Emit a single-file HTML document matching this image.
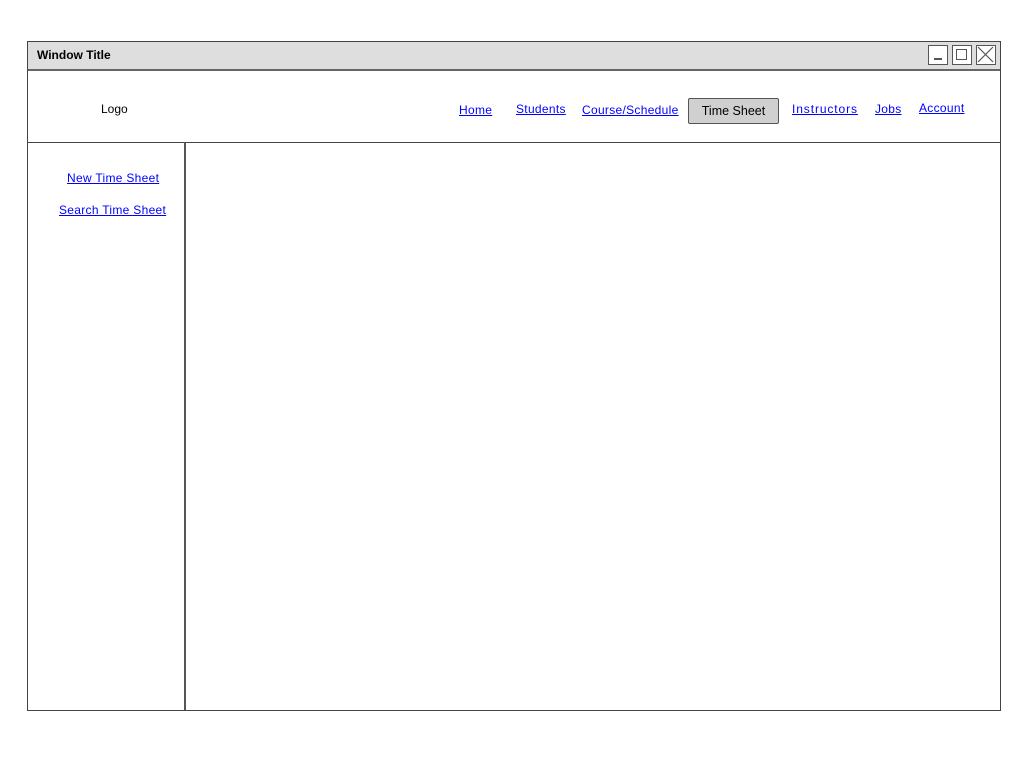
<!DOCTYPE html>
<html><head><style>
body{margin:0;width:1024px;height:768px;background:#fff;position:relative;overflow:hidden;font-family:"Liberation Sans",sans-serif;font-size:12px;color:#000}
.a{position:absolute}
a{color:#00f;text-decoration:underline;position:absolute;white-space:nowrap;letter-spacing:0.3px}
.b{position:absolute;border:1.5px solid #555;background:#fff;box-sizing:border-box;width:20px;height:20px;top:45px}
</style></head><body>
<div class="a" style="left:27px;top:41px;width:972px;height:668px;border:1px solid #444"></div>
<div class="a" style="left:28px;top:42px;width:972px;height:27px;background:#dedede;border-bottom:2px solid #666"></div>
<div class="a" style="left:37px;top:48px;font-weight:bold;font-size:12px">Window Title</div>
<div class="b" style="left:928px"><div class="a" style="left:5px;top:12px;width:8px;height:1.5px;background:#555"></div></div>
<div class="b" style="left:952px"><div class="a" style="left:3px;top:3px;width:11px;height:11px;border:1.5px solid #555;box-sizing:border-box"></div></div>
<div class="b" style="left:976px"><svg class="a" style="left:0;top:0" width="17" height="17"><path d="M1 1L16 16M16 1L1 16" stroke="#555" stroke-width="1.2"/></svg></div>
<div class="a" style="left:28px;top:142px;width:972px;height:1px;background:#444"></div>
<div class="a" style="left:184px;top:142px;width:1.5px;height:568px;background:#555"></div>
<div class="a" style="left:101px;top:102px">Logo</div>
<a style="left:459px;top:103px">Home</a>
<a style="left:516px;top:102px">Students</a>
<a style="left:582px;top:103px">Course/Schedule</a>
<div class="a" style="left:688px;top:98px;width:91px;height:26px;background:#d0d0d0;border:1.5px solid #555;border-radius:2px;box-sizing:border-box;text-align:center;line-height:24px;font-size:12.5px">Time Sheet</div>
<a style="left:792px;top:102px;letter-spacing:0.9px">Instructors</a>
<a style="left:875px;top:102px">Jobs</a>
<a style="left:919px;top:101px">Account</a>
<a style="left:67px;top:171px">New Time Sheet</a>
<a style="left:59px;top:203px">Search Time Sheet</a>
</body></html>
